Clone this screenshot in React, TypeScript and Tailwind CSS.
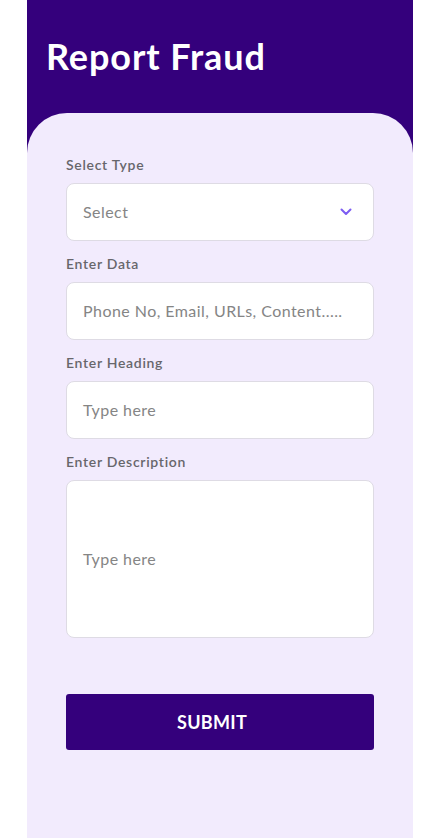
import React from "react";

function Field({ label, children }: { label: string; children: React.ReactNode }) {
  return (
    <div className="flex flex-col">
      <label className="text-[14px] leading-[20px] font-semibold text-[#67666b] tracking-[0.7px]">{label}</label>
      <div className="mt-2">{children}</div>
    </div>
  );
}

export default function App() {
  return (
    <div className="min-h-screen bg-white" style={{ fontFamily: "Lato, 'Open Sans', sans-serif" }}>
      <div className="mx-auto w-[386px] min-h-screen flex flex-col bg-[#34007c]">
        <div className="h-[113px] pl-[19px] pt-[34px]">
          <h1 className="text-[36px] leading-[44px] font-bold text-white tracking-[0.9px]">Report Fraud</h1>
        </div>
        <div className="flex-1 rounded-t-[40px] bg-[#f2ebfd] px-[39px] pt-[42px] pb-10">
          <div className="flex flex-col gap-[13px]">
            <Field label="Select Type">
              <div className="h-[58px] rounded-[8px] border border-[#dedbe4] bg-white flex items-center justify-between pl-4 pr-[21px]">
                <span className="text-[16px] text-[#858585] tracking-[0.45px]">Select</span>
                <svg width="12" height="8" viewBox="0 0 12 8" fill="none">
                  <path d="M1.5 1.5 L6 6 L10.5 1.5" stroke="#7c5cf2" strokeWidth="2" strokeLinecap="round" strokeLinejoin="round" />
                </svg>
              </div>
            </Field>
            <Field label="Enter Data">
              <div className="h-[58px] rounded-[8px] border border-[#dedbe4] bg-white flex items-center pl-4">
                <span className="text-[16px] text-[#858585] tracking-[0.45px]">Phone No, Email, URLs, Content.....</span>
              </div>
            </Field>
            <Field label="Enter Heading">
              <div className="h-[58px] rounded-[8px] border border-[#dedbe4] bg-white flex items-center pl-4">
                <span className="text-[16px] text-[#858585] tracking-[0.45px]">Type here</span>
              </div>
            </Field>
            <Field label="Enter Description">
              <div className="h-[158px] rounded-[8px] border border-[#dedbe4] bg-white flex items-center pl-4">
                <span className="text-[16px] text-[#858585] tracking-[0.45px]">Type here</span>
              </div>
            </Field>
          </div>
          <button className="mt-[56px] w-full h-[56px] rounded-[3px] bg-[#34007c] text-white text-[18px] font-bold tracking-[0.3px] pr-4">
            SUBMIT
          </button>
        </div>
      </div>
    </div>
  );
}
